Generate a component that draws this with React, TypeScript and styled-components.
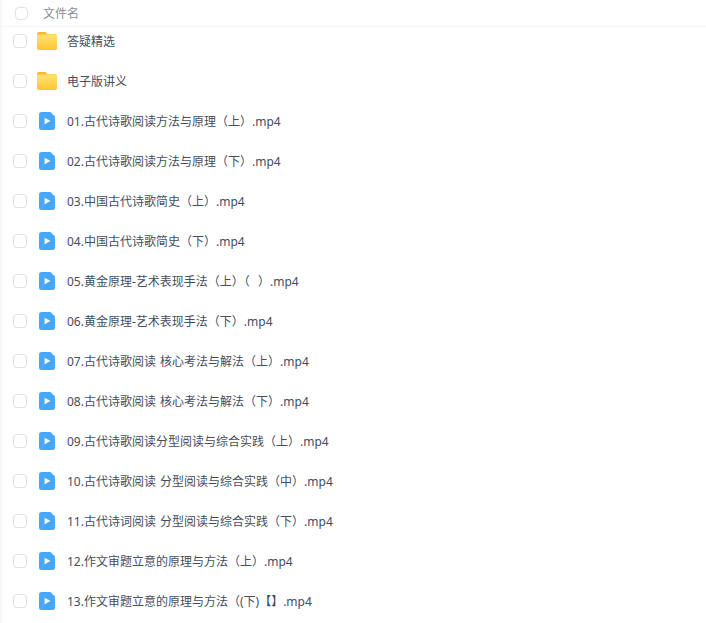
import React from 'react';
import styled, { createGlobalStyle } from 'styled-components';

const folders = ['答疑精选', '电子版讲义'];

const videos = [
    '01.古代诗歌阅读方法与原理（上）.mp4',
    '02.古代诗歌阅读方法与原理（下）.mp4',
    '03.中国古代诗歌简史（上）.mp4',
    '04.中国古代诗歌简史（下）.mp4',
    '05.黄金原理-艺术表现手法（上）（  ）.mp4',
    '06.黄金原理-艺术表现手法（下）.mp4',
    '07.古代诗歌阅读 核心考法与解法（上）.mp4',
    '08.古代诗歌阅读 核心考法与解法（下）.mp4',
    '09.古代诗歌阅读分型阅读与综合实践（上）.mp4',
    '10.古代诗歌阅读 分型阅读与综合实践（中）.mp4',
    '11.古代诗词阅读 分型阅读与综合实践（下）.mp4',
    '12.作文审题立意的原理与方法（上）.mp4',
    '13.作文审题立意的原理与方法（(下)【】.mp4',
];

const FolderIcon = () => (
    <svg width="20" height="18" viewBox="0 0 20 18">
        <defs>
            <linearGradient id="folderBody" x1="0" y1="0" x2="0" y2="1">
                <stop offset="0" stopColor="#ffe173" />
                <stop offset="1" stopColor="#fdc62f" />
            </linearGradient>
        </defs>
        <path d="M2 0H7.5C8.3 0 8.8 0.4 9.3 0.9L10.6 2.2H18A2 2 0 0 1 20 4.2V8H0V2A2 2 0 0 1 2 0Z" fill="#f9b82a" />
        <rect x="0" y="2.6" width="20" height="15.4" rx="1.8" fill="url(#folderBody)" />
    </svg>
);

const VideoIcon = () => (
    <svg width="16" height="18" viewBox="0 0 16 18">
        <path d="M2.5 0H11.5L16 4.5V15.5A2.5 2.5 0 0 1 13.5 18H2.5A2.5 2.5 0 0 1 0 15.5V2.5A2.5 2.5 0 0 1 2.5 0Z" fill="#47a7fa" />
        <path d="M5.6 5.7V12.3L11.4 9Z" fill="#fff" />
    </svg>
);

const App = () => {
    return (
        <Page>
            <GlobalStyle />
            <Header>
                <Checkbox $header />
                <HeaderLabel>文件名</HeaderLabel>
            </Header>
            <List>
                {folders.map((name) => (
                    <Row key={name}>
                        <Checkbox />
                        <IconSlot>
                            <FolderIcon />
                        </IconSlot>
                        <FileName>{name}</FileName>
                    </Row>
                ))}
                {videos.map((name) => (
                    <Row key={name}>
                        <Checkbox />
                        <IconSlot>
                            <VideoIcon />
                        </IconSlot>
                        <FileName>{name}</FileName>
                    </Row>
                ))}
            </List>
        </Page>
    );
};

export default App;

const GlobalStyle = createGlobalStyle`
    html, body {
        margin: 0;
        padding: 0;
        background: #fff;
    }
`;

const Page = styled.div`
    width: 706px;
    height: 623px;
    overflow: hidden;
    box-sizing: border-box;
    border-left: 2px solid #f7f7f8;
    font-family: "Noto Sans", "Noto Sans CJK SC", sans-serif;
    font-size: 12px;
    line-height: 16px;
    word-spacing: 1px;
`;

const Header = styled.div`
    display: flex;
    align-items: center;
    height: 27px;
    box-sizing: border-box;
    border-bottom: 1px solid #f4f5f6;
    padding-left: 13px;
`;

const HeaderLabel = styled.span`
    margin-left: 15px;
    padding-top: 2px;
    color: #888e99;
`;

const List = styled.div`
    display: flex;
    flex-direction: column;
    gap: 12px;
`;

const Row = styled.div`
    display: flex;
    align-items: center;
    height: 28px;
    padding-left: 11px;
`;

const Checkbox = styled.span<{ $header?: boolean }>`
    flex: none;
    width: ${(props) => (props.$header ? '13px' : '14px')};
    height: ${(props) => (props.$header ? '13px' : '14px')};
    box-sizing: border-box;
    border: 1px solid #dfe1e4;
    border-radius: 4px;
`;

const IconSlot = styled.span`
    display: flex;
    justify-content: center;
    width: 20px;
    margin-left: 10px;
`;

const FileName = styled.span`
    margin-left: 10px;
    padding-top: 2px;
    color: #454d5e;
    white-space: pre;
`;
